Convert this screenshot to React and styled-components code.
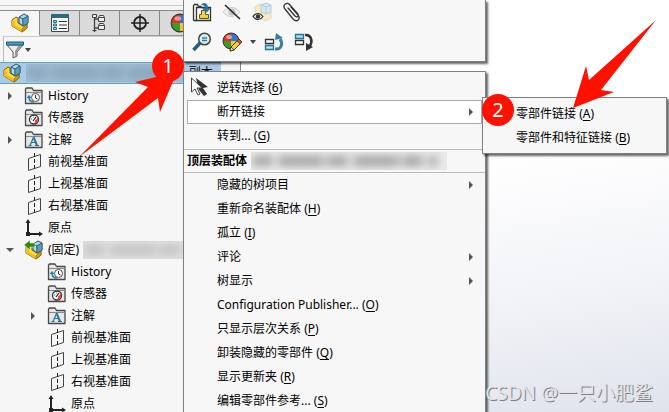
import React, { useState } from 'react';
import styled, { createGlobalStyle, css } from 'styled-components';

const GlobalStyle = createGlobalStyle`
    * { box-sizing: border-box; }
    body {
        margin: 0;
        color: #000;
        font-family: "Noto Sans", "Noto Sans CJK SC", sans-serif;
        font-size: 12px;
        line-height: 16px;
    }
    button {
        border: none;
        padding: 0;
        background: none;
        color: inherit;
        font: inherit;
        text-align: left;
    }
    svg { display: block; flex: none; overflow: visible; }
    u { text-underline-offset: 2px; }
`

const Page = styled.div`
    position: relative;
    display: flex;
    height: 100vh;
    overflow: hidden;
    background: #f6f6f6;
`

const Panel = styled.aside`
    flex: 0 0 36%;
    display: flex;
    flex-direction: column;
    border-right: 1px solid #888;
    background: #f6f6f6;
    > * { flex: none; }
`

const Workspace = styled.main`
    flex: 1;
    background: linear-gradient(170deg, #fff 40%, #f3f4f8 70%, #dfe3ec 100%);
`

const Strip = styled.div`
    height: 6px;
    margin-bottom: 4px;
    border-bottom: 1px solid #ccc;
`

const Tabs = styled.div`
    display: flex;
    height: 26px;
    border-top: 1px solid #888;
`

const Tab = styled.button`
    flex: 0 0 40px;
    display: flex;
    align-items: center;
    justify-content: center;
    border-right: 1px solid #888;
    border-bottom: 1px solid ${props => props.$active ? '#f6f6f6' : '#999'};
    background: ${props => props.$active ? '#f6f6f6' : '#dadada'};
`

const Filter = styled.button`
    display: flex;
    align-items: center;
    gap: 1px;
    height: 26px;
    margin-left: 3px;
    padding-left: 2px;
    border-top: 1px solid #ccc;
    border-left: 1px solid #bbb;
`

const TreeList = styled.ul`
    margin: 0;
    padding: 0;
    list-style: none;
`

const TreeRow = styled.li`
    display: flex;
    align-items: center;
    height: 22px;
    padding-left: ${props => props.$level * 23}px;
    white-space: nowrap;
    ${props => props.$selected && css`
        margin-right: 19px;
        margin-bottom: 1px;
        padding-left: 2px;
        border-top: 1px solid #5fa0c4;
        border-bottom: 1px solid #5fa0c4;
        background: #a9cbe6;
    `}
`

const Toggle = styled.button`
    display: flex;
    align-items: center;
    justify-content: center;
    width: 20px;
    height: 16px;
    margin-right: 4px;
    visibility: ${props => props.$hidden ? 'hidden' : 'visible'};
`

const Label = styled.span`
    margin-left: 4px;
`

// smeared stand-in for a name that is hidden
const Redacted = styled.span`
    flex: ${props => props.$width ? `0 0 ${props.$width}px` : 1};
    height: 18px;
    margin-left: 4px;
    overflow: hidden;
    background: ${props => props.$base};
    &::before {
        content: "";
        display: block;
        height: 10px;
        margin: 4px 10px 4px 2px;
        background: repeating-linear-gradient(100deg, ${props => props.$ink} 0 18px, transparent 22px 24px, ${props => props.$ink} 28px 68px, transparent 73px 74px);
        filter: blur(4px);
    }
`

const Popup = styled.div`
    position: absolute;
    top: ${props => props.$top}px;
    left: ${props => props.$left}px;
    width: ${props => props.$width}px;
    border: 1px solid #808080;
    background: #f7f7f7;
    box-shadow: 2px 2px 2px rgba(0, 0, 0, 0.6);
`

const QuickTools = styled(Popup)`
    display: flex;
    flex-direction: column;
    gap: 10px;
    padding: 2px 8px 9px;
    border-top: none;
`

const ToolRow = styled.div`
    display: flex;
    align-items: center;
    gap: 10px;
`

const Tool = styled.button`
    display: flex;
    align-items: center;
    justify-content: center;
    width: ${props => props.$narrow ? 8 : 20}px;
    height: 20px;
    margin: 0 ${props => props.$narrow ? -3 : 0}px;
`

const Menu = styled(Popup)`
    padding: 4px 0 2px;
`

const Group = styled.div`
    padding: 0 3px 1px;
`

const MenuItem = styled.button`
    display: flex;
    align-items: center;
    justify-content: space-between;
    width: 100%;
    height: 24px;
    padding: 0 6px 0 29px;
    border: 1px solid ${props => props.$open ? '#aaa' : 'transparent'};
    background: ${props => props.$open ? '#fff' : 'transparent'};
    white-space: nowrap;
    &:hover { background: #fff; border-color: #aaa; }
`

const MenuTitle = styled.div`
    display: flex;
    align-items: center;
    height: 24px;
    padding-left: 3px;
    border-top: 1px solid #bbb;
    border-bottom: 1px solid #bbb;
    font-weight: bold;
`

const Overlay = styled.svg`
    position: absolute;
    inset: 0;
    width: 100%;
    height: 100%;
    pointer-events: none;
`

const Step = styled.span`
    position: absolute;
    top: ${props => props.$top}px;
    left: ${props => props.$left}px;
    display: flex;
    align-items: center;
    justify-content: center;
    width: 32px;
    height: 32px;
    border-radius: 50%;
    background: #ff1100;
    color: #fff;
    font-size: 20px;
    line-height: 32px;
`

const Pointer = styled.div`
    position: absolute;
    top: 76px;
    left: 190px;
`

const Watermark = styled.footer`
    position: absolute;
    right: 16px;
    bottom: 6px;
    color: #e4e4e8;
    font-size: 19px;
    line-height: 26px;
    white-space: nowrap;
    text-shadow: 1px 1px 0 #808080;
`

const Assembly = ({ fixed }) => (
    <svg width="20" height="20" viewBox="0 0 20 20" strokeLinejoin="round">
        <path d="M2 7l4-3 2 1v5l5 3 4-2v4l-5 4L2 13z" fill="#ffd83b" stroke="#7d5b00" />
        <path d="M2 7l3 2v3l7 4v3L2 13z" fill="#f5bd21" />
        <path d="M12 16v3l5-4v-4z" fill="#d89c12" stroke="#7d5b00" strokeWidth=".6" />
        <path d="M9 4l5-3 4 2v7l-5 3-4-3z" fill="#a9d8ef" stroke="#25566f" />
        <path d="M9 4l4 2 5-3M13 6v7" fill="none" stroke="#25566f" />
        <path d="M13 6l5-3v7l-5 3z" fill="#5b9dbd" stroke="#25566f" strokeWidth=".6" />
        {fixed && <path d="M0 5l6-5v3h5v4H6v3z" fill="#2b8a08" stroke="#f6f6f6" strokeWidth=".5" />}
    </svg>
)

const Folder = ({ kind }) => (
    <svg width="20" height="18" viewBox="0 0 20 18">
        <path d="M1.500 16.500V2l1-1H8l1.500 2.500h8.500v13z" fill="#e6e6e6" stroke="#484848" strokeWidth="1.300" strokeLinejoin="round" />
        <path d="M2 5.500h16" stroke="#888" />
        {kind === 'history' && (
            <g fill="none">
                <circle cx="11.500" cy="10.500" r="4" fill="#fafafa" stroke="#555" />
                <path d="M11.500 8v3l2 1" stroke="#333" />
                <path d="M10 15c-4 0-5-2-5-5" stroke="#2a7ea5" strokeWidth="1.600" />
                <path d="M2.500 11L5 8l2.500 3z" fill="#2a7ea5" />
            </g>
        )}
        {kind === 'sensor' && (
            <g fill="none">
                <circle cx="10" cy="10.500" r="4.500" fill="#fff" stroke="#333" strokeWidth="1.300" />
                <path d="M14 9a4 4 0 0 1-3.500 5.500l.5-3z" fill="#ee4326" />
                <path d="M9 12l3-4" stroke="#222" strokeWidth="1.200" />
                <path d="M7 10h1M9.500 7.500v1" stroke="#2a7ea5" />
            </g>
        )}
        {kind === 'note' && (
            <g fill="none" stroke="#2a7596">
                <path d="M6 14.500L9.500 6.500M7.500 11.500h4.500" strokeWidth="1.200" />
                <path d="M9.500 6l3.500 8.500" strokeWidth="2" />
                <path d="M4.500 14.500h3M11 14.500h4" />
            </g>
        )}
    </svg>
)

const Plane = () => (
    <svg width="20" height="18" viewBox="0 0 20 18" fill="none" stroke="#444">
        <path d="M4.500 5.500l12-4v12l-12 4z" />
        <path d="M10.500 0v18" stroke="#222" strokeDasharray="4 2" />
    </svg>
)

const Origin = () => (
    <svg width="20" height="18" viewBox="0 0 20 18">
        <path d="M4 2v13H16" fill="none" stroke="#222" strokeWidth="2" />
        <path d="M1.500 4L4 0l2.500 4zM15 12.500l4 2.500-4 2.500zM2 13h4v4H2z" fill="#222" />
    </svg>
)

const Ball = () => (
    <g>
        <path d="M9 9V1a8 8 0 0 0-8 8z" fill="#e52d28" />
        <path d="M9 9V1a8 8 0 0 1 8 8z" fill="#3476ce" />
        <path d="M9 9H1a8 8 0 0 0 8 8z" fill="#3e9b29" />
        <path d="M9 9h8a8 8 0 0 1-8 8z" fill="#f0c82e" />
        <ellipse cx="7" cy="5" rx="3" ry="2" fill="#fff" opacity=".5" />
        <circle cx="9" cy="9" r="8" fill="none" stroke="#333" />
    </g>
)

const Arrow = ({ down }) => (
    <svg width="8" height="8" viewBox="0 0 8 8" fill="#555">
        <path d={down ? 'M0 2h8L4 6z' : 'M2 0v8l4-4z'} />
    </svg>
)

const treeIcons = {
    history: <Folder kind="history" />,
    sensor: <Folder kind="sensor" />,
    note: <Folder kind="note" />,
    plane: <Plane />,
    origin: <Origin />,
    fixed: <Assembly fixed />
}

const features = [
    { icon: 'history', label: 'History' },
    { icon: 'sensor', label: '传感器' },
    { icon: 'note', label: '注解', closed: true },
    { icon: 'plane', label: '前视基准面' },
    { icon: 'plane', label: '上视基准面' },
    { icon: 'plane', label: '右视基准面' },
    { icon: 'origin', label: '原点' }
]

const tree = [
    ...features.map((f, i) => ({ ...f, level: 0, closed: f.closed || i === 0 })),
    { icon: 'fixed', label: '(固定)', level: 0, opened: true, redacted: true },
    ...features.map(f => ({ ...f, level: 1 }))
]

const topItems = [
    { label: '逆转选择', mnemonic: '6' },
    { label: '断开链接', sub: true },
    { label: '转到...', mnemonic: 'G' }
]

const assemblyItems = [
    { label: '隐藏的树项目', sub: true },
    { label: '重新命名装配体', mnemonic: 'H' },
    { label: '孤立', mnemonic: 'I' },
    { label: '评论', sub: true },
    { label: '树显示', sub: true },
    { label: 'Configuration Publisher...', mnemonic: 'O' },
    { label: '只显示层次关系', mnemonic: 'P' },
    { label: '卸装隐藏的零部件', mnemonic: 'Q' },
    { label: '显示更新夹', mnemonic: 'R' },
    { label: '编辑零部件参考...', mnemonic: 'S' }
]

const linkItems = [
    { label: '零部件链接', mnemonic: 'A' },
    { label: '零部件和特征链接', mnemonic: 'B' }
]

function Items({ items, open, onOpen }) {
    return items.map(item => (
        <MenuItem
            key={item.label}
            role="menuitem"
            $open={open === item.label}
            onClick={() => item.sub && onOpen(item.label)}
        >
            <span>{item.label}{item.mnemonic && <> (<u>{item.mnemonic}</u>)</>}</span>
            {item.sub && <Arrow />}
        </MenuItem>
    ))
}

function FeatureTree() {
    const [tab, setTab] = useState(0);

    const tabs = [
        ['FeatureManager', <Assembly />],
        ['PropertyManager', (
            <svg width="20" height="20" viewBox="0 0 20 20">
                <path d="M1.500 1.500h17v17h-17z" fill="#fff" stroke="#444" />
                <path d="M1 1h18v4H1z" fill="#276b8b" />
                <path d="M9 8.500h8M9 12h8M9 15.500h8" stroke="#333" />
                <path d="M3.500 7.500h3v2h-3zM3.500 11h3v2h-3zM3.500 14.500h3v2h-3z" fill="#9bd3ee" stroke="#276b8b" />
            </svg>
        )],
        ['ConfigurationManager', (
            <svg width="20" height="20" viewBox="0 0 20 20" fill="#eee" stroke="#444">
                <path d="M4.500 1v18M4.500 6H9M4.500 15H9" strokeWidth="1.300" />
                <path d="M2.500 1.500h4v3h-4zM2.500 17.500h4" />
                <path d="M8.500 4.500l1-2h4l1 2v4h-6zM8.500 12.500l1-2h4l1 2v4h-6zM8.500 4.500h6M8.500 12.500h6" />
            </svg>
        )],
        ['DimXpertManager', (
            <svg width="20" height="20" viewBox="0 0 20 20" fill="none" stroke="#222" strokeWidth="1.800">
                <circle cx="10" cy="10" r="6" />
                <path d="M10 1v18M1 10h18" strokeWidth="1.500" />
            </svg>
        )],
        ['DisplayManager', <svg width="20" height="20" viewBox="0 0 18 18"><Ball /></svg>]
    ]

    return (
        <Panel>
            <Strip />
            <Tabs role="tablist">
                {tabs.map(([name, icon], i) => (
                    <Tab key={name} role="tab" aria-label={name} aria-selected={tab === i} $active={tab === i} onClick={() => setTab(i)}>
                        {icon}
                    </Tab>
                ))}
            </Tabs>
            <Filter aria-label="Filter">
                <svg width="18" height="18" viewBox="0 0 18 18">
                    <path d="M1 4l6 7v6l4-2v-4l6-7z" fill="#eee" stroke="#555" />
                    <path d="M11 10l5-6h-3l-4 6v5l2-1z" fill="#999" />
                    <path d="M.5 1h17v3H.5z" fill="#4a9fc6" stroke="#1e5875" />
                </svg>
                <svg width="6" height="4" viewBox="0 0 6 4"><path d="M0 0h6L3 4z" fill="#444" /></svg>
            </Filter>
            <TreeList>
                <TreeRow $selected $level={0}>
                    <Assembly />
                    <Redacted $base="#9fbbd0" $ink="#86a5bb" />
                    <Label>副本</Label>
                    <Redacted $width={4} $base="transparent" $ink="transparent" />
                </TreeRow>
                {tree.map((node, i) => (
                    <TreeRow key={i} $level={node.level}>
                        <Toggle aria-label={`Toggle ${node.label}`} $hidden={!node.closed && !node.opened}>
                            <Arrow down={node.opened} />
                        </Toggle>
                        {treeIcons[node.icon]}
                        <Label>{node.label}</Label>
                        {node.redacted && <Redacted $base="#e0e0e0" $ink="#c2c2c2" />}
                    </TreeRow>
                ))}
            </TreeList>
        </Panel>
    )
}

function QuickBar() {
    return (
        <QuickTools $top={0} $left={183} $width={303}>
            <ToolRow>
                <Tool aria-label="Open part">
                    <svg width="20" height="20" viewBox="0 0 20 20">
                        <path d="M1.500 18.500v-15l1-1h3l1 2h3M1.500 18.500h4" fill="none" stroke="#333" strokeWidth="1.300" />
                        <path d="M4.500 5.500h14v13h-14z" fill="#fff" stroke="#333" strokeWidth="1.300" />
                        <path d="M9.500 8.500h4v4h3v4h-9v-4h2z" fill="#f5cf4a" stroke="#6d5307" />
                        <path d="M9 3c4-4 7-1 7 3h3l-5 5-4-5h3c0-2-1-3-4-3z" fill="#2b7399" />
                    </svg>
                </Tool>
                <Tool aria-label="Hide">
                    <svg width="20" height="20" viewBox="0 0 20 20" fill="none">
                        <path d="M1 10c5-6 12-6 17 0-5 6-12 6-17 0z" fill="#eee" stroke="#ccc" />
                        <circle cx="10" cy="10" r="3.500" fill="#c4c4c4" />
                        <path d="M3 3l15 14" stroke="#222" strokeWidth="1.500" />
                    </svg>
                </Tool>
                <Tool aria-label="Transparency">
                    <svg width="20" height="20" viewBox="0 0 20 20">
                        <path d="M3 5l5-3 3 1v5l8 2v6l-6 3-10-5z" fill="#f9ebc1" stroke="#e5d9b4" />
                        <path d="M9 3l5-2 5 2v7l-5 2-5-2z" fill="#d3e8ef" stroke="#b7ccd4" />
                        <path d="M9 3l5 2 5-2M14 5v7" fill="none" stroke="#b7ccd4" />
                        <path d="M1 14.500c3-4 7-4 10 0-3 4-7 4-10 0z" fill="#fff" stroke="#222" strokeWidth="1.200" />
                        <circle cx="6" cy="14.500" r="2.200" fill="#333" />
                    </svg>
                </Tool>
                <Tool aria-label="Attach">
                    <svg width="20" height="20" viewBox="0 0 20 20" fill="none" stroke="#333" strokeWidth="1.300" strokeLinecap="round">
                        <path d="M6 6l7 8c2 2 4 0 3-2L8 3C5-1 0 3 3 7l8 10c4 4 8 0 5-4l-7-8" />
                    </svg>
                </Tool>
            </ToolRow>
            <ToolRow>
                <Tool aria-label="Zoom to selection">
                    <svg width="20" height="20" viewBox="0 0 20 20">
                        <path d="M1.500 18L8 11" stroke="#225f80" strokeWidth="3.500" />
                        <circle cx="12.500" cy="7" r="5.800" fill="#dcecf2" stroke="#444" strokeWidth="1.500" />
                        <path d="M10 6h5M10 8.500h5" stroke="#317fa4" strokeWidth="1.500" />
                    </svg>
                </Tool>
                <Tool aria-label="Appearance">
                    <svg width="20" height="20" viewBox="0 0 20 20">
                        <Ball />
                        <path d="M8 19l1-4 8-8 3 3-8 8z" fill="#f5cc3c" stroke="#4c3500" />
                        <path d="M15 9l3 3 2-2-3-3z" fill="#df4838" stroke="#4c3500" strokeWidth=".6" />
                        <path d="M8 19l1-4 3 3z" fill="#f4e1b3" stroke="#222" strokeWidth=".7" />
                    </svg>
                </Tool>
                <Tool $narrow aria-label="Appearance options">
                    <svg width="6" height="4" viewBox="0 0 6 4"><path d="M0 0h6L3 4z" fill="#444" /></svg>
                </Tool>
                <Tool aria-label="Move up">
                    <svg width="20" height="20" viewBox="0 0 20 20">
                        <path d="M1.500 7.500h8v4h-8z" fill="#fff" stroke="#333" strokeWidth="1.300" />
                        <path d="M1.500 13.500h8v4h-8z" fill="#a6e0f5" stroke="#287392" strokeWidth="1.300" />
                        <path d="M11 17c7 1 8-6 5-10" fill="none" stroke="#3a7e9f" strokeWidth="3" />
                        <path d="M11 8l1-7 7 5z" fill="#3a7e9f" />
                    </svg>
                </Tool>
                <Tool aria-label="Move down">
                    <svg width="20" height="20" viewBox="0 0 20 20">
                        <path d="M1.500 2.500h8v4h-8z" fill="#a6e0f5" stroke="#287392" strokeWidth="1.300" />
                        <path d="M1.500 8.500h8v4h-8z" fill="#fff" stroke="#333" strokeWidth="1.300" />
                        <path d="M11 3c6-1 8 6 5 11" fill="none" stroke="#333" strokeWidth="2.500" />
                        <path d="M12 11l7 4-7 4z" fill="#333" />
                    </svg>
                </Tool>
            </ToolRow>
        </QuickTools>
    )
}

export default function App() {
    const [open, setOpen] = useState('断开链接');

    return (
        <Page>
            <GlobalStyle />
            <FeatureTree />
            <Workspace />
            <QuickBar />

            <Menu role="menu" $top={71} $left={183} $width={303}>
                <Group>
                    <Items items={topItems} open={open} onOpen={setOpen} />
                </Group>
                <MenuTitle>
                    顶层装配体
                    <Redacted $width={196} $base="#e9e9e9" $ink="#a4a4a4" />
                </MenuTitle>
                <Group>
                    <Items items={assemblyItems} open={open} onOpen={setOpen} />
                </Group>
            </Menu>

            {open === '断开链接' && (
                <Menu role="menu" $top={97} $left={482} $width={185}>
                    <Group>
                        <Items items={linkItems} />
                    </Group>
                </Menu>
            )}

            <Pointer>
                <svg width="20" height="20" viewBox="0 0 20 20">
                    <path d="M6 2l12 9-5 1 4 6-3 2-5-6z" fill="#333" />
                    <path d="M1.500 2v14l3.500-3 3 6 2-1-3-6h5z" fill="#fff" stroke="#444" />
                </svg>
            </Pointer>

            <Overlay aria-hidden="true" fill="#ff1100">
                <path d="M79 157L148 87 135 82 177 72 160 112 158 98z" />
                <path d="M656 20L589 80 586 66 573 108 614 92 601 90z" />
            </Overlay>
            <Step $top={50} $left={152}>1</Step>
            <Step $top={94} $left={482}>2</Step>
            <Watermark>CSDN @一只小肥鲨</Watermark>
        </Page>
    )
}
